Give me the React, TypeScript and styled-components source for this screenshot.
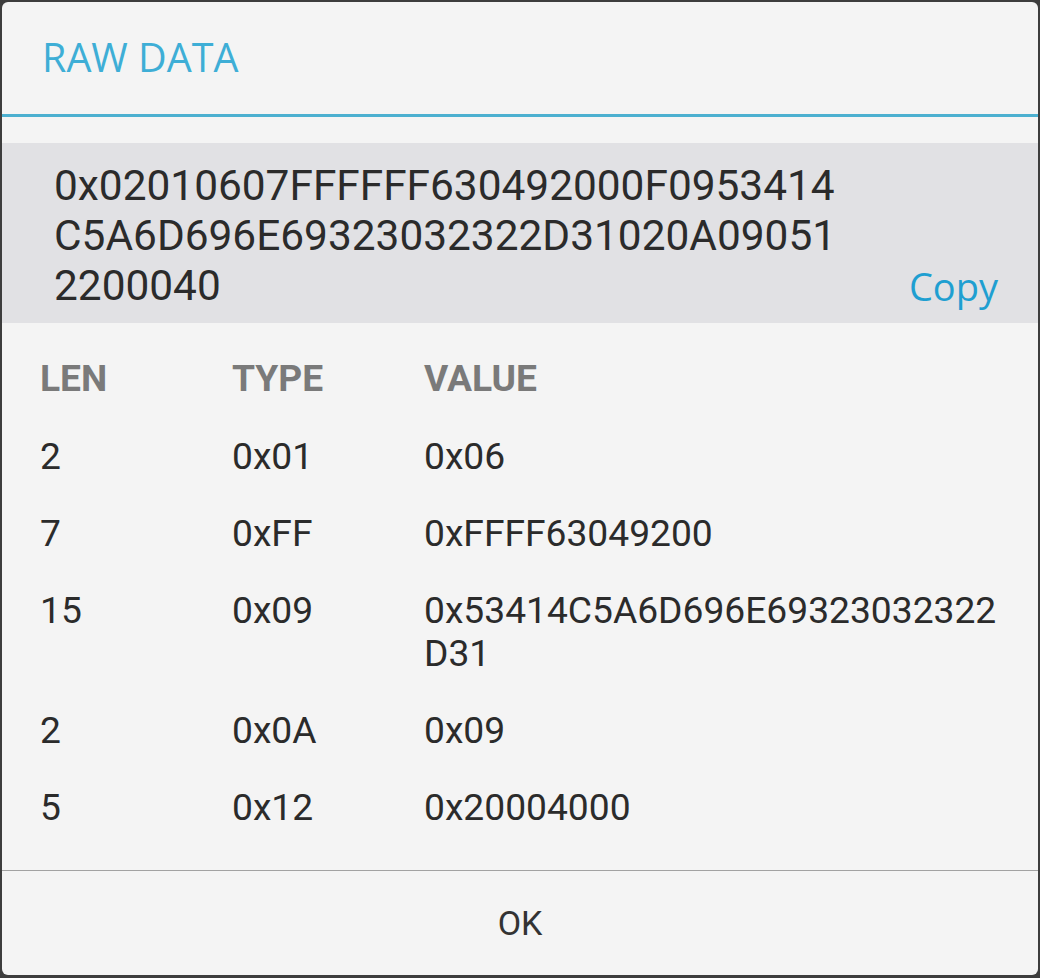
import React from 'react';
import styled, { createGlobalStyle } from 'styled-components';

const GlobalStyle = createGlobalStyle`
  html, body {
    margin: 0;
    padding: 0;
    background: #3d3d3d;
  }
  body {
    font-family: Roboto, "Noto Sans", sans-serif;
  }
`;

const Dialog = styled.div`
  box-sizing: border-box;
  margin: 2px 2px 0 2px;
  height: 973px;
  background: #f4f4f4;
  border-radius: 6px;
  overflow: hidden;
  display: flex;
  flex-direction: column;
`;

const Title = styled.div`
  height: 115px;
  box-sizing: border-box;
  padding: 0 40px 2px;
  display: flex;
  align-items: center;
  border-bottom: 3px solid #4cb0d0;
  font-family: "Open Sans", Roboto, sans-serif;
  font-size: 39.5px;
  color: #3eaed6;
`;

const RawBox = styled.div`
  margin-top: 26px;
  min-height: 180px;
  box-sizing: border-box;
  background: #e1e1e4;
  padding: 18px 40px 12px 52px;
  display: flex;
  align-items: flex-end;
  justify-content: space-between;
`;

const RawText = styled.div`
  width: 810px;
  font-size: 42.4px;
  line-height: 50px;
  color: #2b2b2b;
  word-break: break-all;
`;

const CopyButton = styled.button`
  border: none;
  background: none;
  padding: 0;
  font-family: "Open Sans", Roboto, sans-serif;
  font-size: 38px;
  line-height: 50px;
  color: #1f9fd1;
  cursor: pointer;
`;

const Table = styled.div`
  flex: 1;
  padding: 16px 24px 0 38px;
`;

const Row = styled.div<{ $head?: boolean }>`
  display: grid;
  grid-template-columns: 192px 192px 1fr;
  padding: ${p => (p.$head ? '18px 0' : '17px 0')};
  font-size: 37.2px;
  line-height: 43px;
  font-weight: ${p => (p.$head ? 700 : 400)};
  color: ${p => (p.$head ? '#7a7a7a' : '#2b2b2b')};
`;

const Cell = styled.div`
  word-break: break-all;
`;

const Footer = styled.div`
  height: 104px;
  border-top: 1px solid #a2a2a2;
  display: flex;
  align-items: center;
  justify-content: center;
`;

const OkButton = styled.button`
  border: none;
  background: none;
  font-family: Roboto, sans-serif;
  font-size: 34px;
  color: #333;
  cursor: pointer;
`;

const raw = '0x02010607FFFFFF630492000F0953414C5A6D696E69323032322D31020A090512200040';

const rows = [
  { len: '2', type: '0x01', value: '0x06' },
  { len: '7', type: '0xFF', value: '0xFFFF63049200' },
  { len: '15', type: '0x09', value: '0x53414C5A6D696E69323032322D31' },
  { len: '2', type: '0x0A', value: '0x09' },
  { len: '5', type: '0x12', value: '0x20004000' },
];

function App() {
  return (
    <>
      <GlobalStyle />
      <Dialog>
        <Title>RAW DATA</Title>
        <RawBox>
          <RawText>
            0x02010607FFFFFF630492000F0953414<br />
            C5A6D696E69323032322D31020A09051<br />
            2200040
          </RawText>
          <CopyButton onClick={() => navigator.clipboard?.writeText(raw)}>Copy</CopyButton>
        </RawBox>
        <Table>
          <Row $head>
            <Cell>LEN</Cell>
            <Cell>TYPE</Cell>
            <Cell>VALUE</Cell>
          </Row>
          {rows.map((r, i) => (
            <Row key={i}>
              <Cell>{r.len}</Cell>
              <Cell>{r.type}</Cell>
              <Cell>{r.value}</Cell>
            </Row>
          ))}
        </Table>
        <Footer>
          <OkButton>OK</OkButton>
        </Footer>
      </Dialog>
    </>
  );
}

export default App;
